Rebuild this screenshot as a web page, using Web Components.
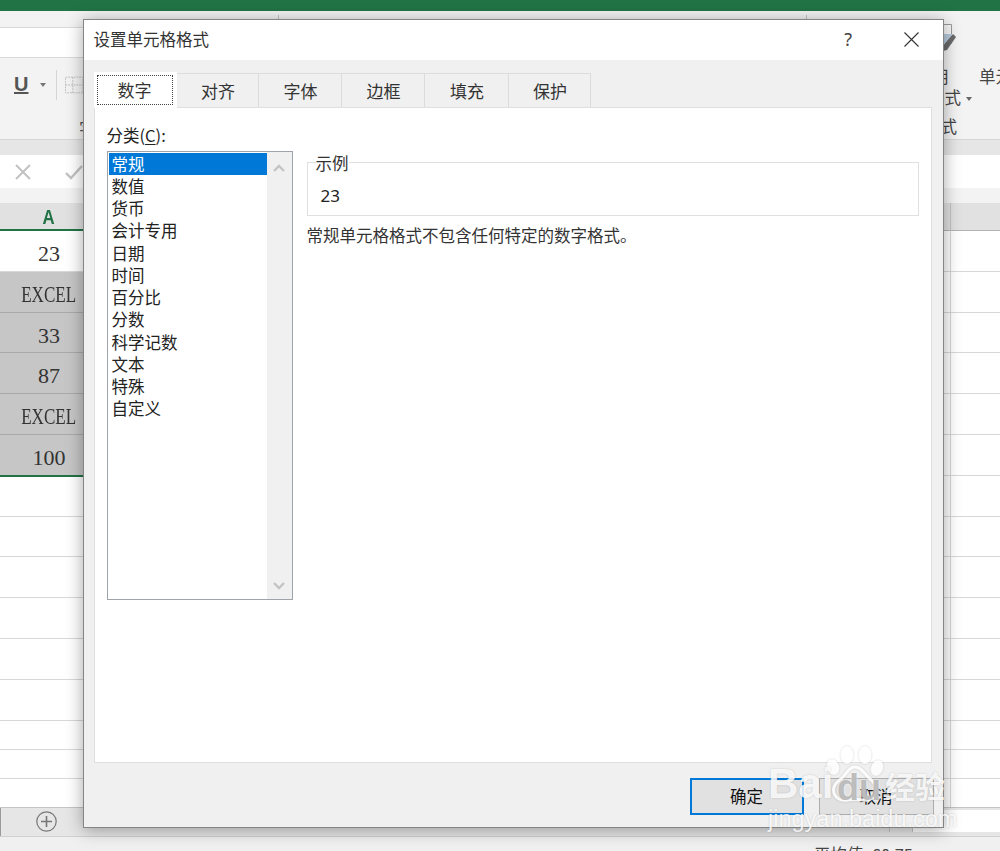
<!DOCTYPE html>
<html lang="zh-CN">
  <head>
    <meta charset="utf8" />
    <title>设置单元格格式</title>
    <style>
      html, body {
        margin: 0;
        height: 851px;
        overflow: hidden;
        font-family: "Noto Sans CJK SC", "Noto Sans", sans-serif;
      }
    </style>
  </head>
  <body>
    <excel-window>
      <excel-ribbon></excel-ribbon>
      <formula-bar></formula-bar>
      <sheet-header></sheet-header>
      <sheet-row value="23" first></sheet-row>
      <sheet-row value="EXCEL" narrow selected></sheet-row>
      <sheet-row value="33" selected></sheet-row>
      <sheet-row value="87" selected></sheet-row>
      <sheet-row value="EXCEL" narrow selected></sheet-row>
      <sheet-row value="100" selected last></sheet-row>
      <sheet-row></sheet-row>
      <sheet-row></sheet-row>
      <sheet-row></sheet-row>
      <sheet-row></sheet-row>
      <sheet-row></sheet-row>
      <sheet-row></sheet-row>
      <sheet-row short></sheet-row>
      <sheet-row short></sheet-row>
      <sheet-row short end></sheet-row>
      <sheet-tabs></sheet-tabs>
      <status-bar></status-bar>
    </excel-window>

    <format-dialog>
      <dialog-tab active>数字</dialog-tab>
      <dialog-tab>对齐</dialog-tab>
      <dialog-tab w="83">字体</dialog-tab>
      <dialog-tab w="83">边框</dialog-tab>
      <dialog-tab w="84">填充</dialog-tab>
      <dialog-tab>保护</dialog-tab>

      <list-item slot="list" selected>常规</list-item>
      <list-item slot="list">数值</list-item>
      <list-item slot="list">货币</list-item>
      <list-item slot="list">会计专用</list-item>
      <list-item slot="list">日期</list-item>
      <list-item slot="list">时间</list-item>
      <list-item slot="list">百分比</list-item>
      <list-item slot="list">分数</list-item>
      <list-item slot="list">科学记数</list-item>
      <list-item slot="list">文本</list-item>
      <list-item slot="list">特殊</list-item>
      <list-item slot="list">自定义</list-item>

      <dialog-button slot="buttons" primary>确定</dialog-button>
      <dialog-button slot="buttons">取消</dialog-button>
    </format-dialog>

    <baidu-mark></baidu-mark>

    <script>
      function define(tag, html, onConnect) {
        const template = document.createElement("template")
        template.innerHTML = html
        customElements.define(tag, class extends HTMLElement {
          connectedCallback() {
            if (!this.shadowRoot) {
              this.attachShadow({ mode: "open" })
              this.shadowRoot.appendChild(template.content.cloneNode(true))
              if (onConnect) onConnect(this, this.shadowRoot)
            }
          }
        })
      }

      define("excel-window", `
<style>
  :host { display: block; width: 1000px; height: 851px; overflow: hidden; background: #f3f3f3; }
  .title { height: 11px; background: #217346; }
</style>
<div class="title"></div>
<slot></slot>
`)

      define("excel-ribbon", `
<style>
  :host {
    display: flex;
    height: 129px;
    box-sizing: border-box;
    border-bottom: 1px solid #d6d6d6;
    background: #f3f3f3;
    color: #444;
    font-size: 16.5px;
    line-height: 22px;
    position: relative;
    overflow: hidden;
  }
  .left { width: 83px; flex: none; }
  .name { height: 31px; margin-top: 16px; background: #fff; box-sizing: border-box; border-top: 1px solid #d9d9d9; border-bottom: 1px solid #d9d9d9; }
  .tools { display: flex; align-items: center; height: 54px; }
  .u { font: bold 20px/22px "Liberation Sans", sans-serif; color: #555; text-decoration: underline; margin: -2px 0 0 14px; width: 28px; }
  .caret { width: 0; height: 0; border: 3px solid transparent; border-top: 4px solid #777; border-bottom: 0; margin-right: 10px; }
  .sep { width: 1px; height: 30px; background: #d5d5d5; margin-right: 8px; }
  .group { margin: 5px 0 0 79px; white-space: nowrap; color: #555; }
  .spacer { flex: 1; min-width: 0; }
  .styles { width: 84px; flex: none; white-space: nowrap; }
  .styles svg { display: block; margin: 13px 0 0 45px; }
  .line1 { margin: 13px 0 0 21px; }
  .line2 { margin-top: -1px; }
  .line2 i { display: inline-block; width: 0; height: 0; border: 3px solid transparent; border-top: 4px solid #666; border-bottom: 0; margin: 0 0 3px 5px; }
  .line3 { margin: 7px 0 0 29px; }
  .cell { flex: none; width: 21px; margin-top: 54px; white-space: nowrap; }
  .tick { position: absolute; top: 4px; width: 1px; height: 4px; background: #c4c4c4; }
</style>
<span class="tick" style="left:278px"></span>
<span class="tick" style="left:806px"></span>
<div class="left">
  <div class="name"></div>
  <div class="tools">
    <span class="u">U</span>
    <span class="caret"></span>
    <span class="sep"></span>
    <svg width="20" height="18" viewBox="0 0 20 18" fill="none" stroke="#bdbdbd" stroke-dasharray="2 1"><path d="M.5.5h19v17H.5zM.5 9h19M8.5.5v17"/></svg>
  </div>
  <div class="group">字体</div>
</div>
<div class="spacer"></div>
<div class="styles">
  <svg width="16" height="28" viewBox="0 0 16 28">
    <path d="M.5.5h11v10H.5z" fill="#f7f7f7" stroke="#9a9a9a"/>
    <path d="M0 10h12v10H0z" fill="#b9cbdf"/>
    <path d="M2 23 13 10l3 3-9 13-4 1z" fill="#6b6b6b"/>
  </svg>
  <div class="line1">套用</div>
  <div class="line2">表格格式<i></i></div>
  <div class="line3">样式</div>
</div>
<div class="cell">单元格</div>
`)

      define("formula-bar", `
<style>
  :host { display: block; padding-top: 15px; background: #e6e6e6; }
  .bar { display: flex; align-items: center; height: 33px; background: #fff; margin-bottom: 15px; }
  svg { display: block; margin-left: 15px; }
  svg + svg { margin-left: 34px; }
</style>
<div class="bar">
  <svg width="16" height="16" viewBox="0 0 16 16" fill="none" stroke="#c2c2c2" stroke-width="2"><path d="M1 1l14 14M15 1 1 15"/></svg>
  <svg width="18" height="16" viewBox="0 0 18 16" fill="none" stroke="#c2c2c2" stroke-width="2.4"><path d="M1 9l5 5L17 2"/></svg>
</div>
`)

      define("sheet-header", `
<style>
  :host { display: grid; grid-template-columns: 98px 853px 1fr; height: 28px; background: #e1e1e1; box-shadow: inset 0 -1px 0 #b4b4b4; }
  .a { text-align: center; border-bottom: 2px solid #217346; height: 28px; box-sizing: border-box; color: #217346; font: bold 21px/28px "Liberation Sans", sans-serif; }
  .a span { display: inline-block; transform: scaleX(.8); }
  .b { border-right: 1px solid #c4c4c4; }
</style>
<div class="a"><span>A</span></div>
<div class="b"></div>
<div></div>
`)

      define("sheet-row", `
<style>
  :host { display: grid; grid-template-columns: 98px 853px 1fr; grid-template-rows: minmax(0, 1fr); height: 40.8px; box-sizing: border-box; background: #fff; border-bottom: 1px solid #d8d8d8; }
  :host([short]) { height: 29px; }
  :host([end]) { height: 28px; border-bottom: 0; }
  .a { text-align: center; color: #333; font: 22px/46px "Liberation Serif", serif; }
  .a span { display: inline-block; }
  :host([narrow]) .a { line-height: 45px; }
  :host([narrow]) .a span { font-size: 24px; transform: scaleX(.71); }
  :host([selected]) .a { background: #c6c6c6; box-shadow: 0 1px 0 #a9a9a9; }
  :host([last]) .a { box-shadow: 0 2px 0 #217346; }
  .b { border-right: 1px solid #d8d8d8; }
</style>
<div class="a"><span></span></div>
<div class="b"></div>
<div></div>
`, (el, root) => {
        root.querySelector("span").textContent = el.getAttribute("value") || ""
      })

      define("sheet-tabs", `
<style>
  :host { display: flex; align-items: center; height: 28px; background: #e6e6e6; border-top: 1px solid #c4c4c4; border-bottom: 1px solid #d0d0d0; }
  .edge { width: 1px; height: 100%; background: #9a9a9a; }
  svg { display: block; margin-left: 35px; }
  .thumb { margin-left: auto; height: 22px; width: 24px; box-sizing: border-box; border-left: 1px solid #c4c4c4; border-right: 1px solid #c4c4c4; align-self: flex-start; margin-top: 2px; }
  .scroll { height: 22px; width: 87px; background: #fff; align-self: flex-start; margin-top: 2px; }
</style>
<div class="edge"></div>
<svg width="21" height="21" viewBox="0 0 21 21" fill="none" stroke="#777"><circle cx="10.5" cy="10.5" r="9.7" stroke-width="1.2"/><path d="M5 10.5h11M10.5 5v11" stroke-width="1.6"/></svg>
<div class="thumb"></div>
<div class="scroll"></div>
`)

      define("status-bar", `
<style>
  :host { display: block; height: 30px; box-sizing: border-box; padding: 6px 0 0 814px; background: #f0f0f0; color: #444; font-size: 16.5px; line-height: 22px; white-space: nowrap; }
</style>
平均值: 60.75
`)

      define("format-dialog", `
<style>
  :host {
    display: block;
    position: absolute;
    left: 83px;
    top: 19px;
    width: 861px;
    height: 809px;
    box-sizing: border-box;
    border: 1.5px solid #858585;
    background: #f0f0f0;
    box-shadow: 0 2px 16px rgba(0, 0, 0, .35);
    color: #222;
    font-size: 16.5px;
    line-height: 22px;
  }
  .title { display: flex; align-items: center; height: 39.5px; box-sizing: border-box; padding: 0 0 2px 9.5px; background: #fff; color: #333; }
  .title .q { margin-left: auto; font-family: "Noto Sans", sans-serif; color: #444; font-size: 18px; }
  .title svg { display: block; margin: 1px 24px 0 52px; }
  .body { padding: 13px 9.5px 0 9.5px; }
  .tabs { display: flex; height: 34px; }
  .panel { width: 838px; height: 656px; box-sizing: border-box; background: #fff; border: 1px solid #dfdfdf; padding: 16px 0 0 12px; display: grid; grid-template-columns: 186px 612px; column-gap: 14px; align-items: start; }
  .label { height: 22px; margin-bottom: 5px; }
  .label u { text-underline-offset: 2px; }
  .list { display: flex; height: 449px; box-sizing: border-box; border: 1px solid #9fa4ab; padding: 1px 0 0 1px; background: #fff; }
  .items { flex: 1; min-width: 0; }
  .bar { display: flex; flex-direction: column; justify-content: space-between; width: 25px; margin-top: -1px; padding: 12px 0 9px; box-sizing: border-box; background: #f0f0f0; }
  .bar svg { display: block; margin-left: 6px; }
  .right { padding-top: 28px; }
  fieldset { margin: 0; padding: 0 8px; border: 1px solid #e0e0e0; }
  legend { padding: 0; line-height: 22px; height: 22px; background: #fff; color: #333; }
  .sample { height: 41px; box-sizing: border-box; padding: 11px 0 0 5px; font: 17px/22px "Noto Sans", sans-serif; }
  .desc { margin-top: 8px; color: #333; }
  .buttons { display: flex; justify-content: flex-end; gap: 15px; padding-top: 15px; }
</style>
<div class="title">
  <span>设置单元格格式</span>
  <span class="q">?</span>
  <svg width="15" height="15" viewBox="0 0 15 15" fill="none" stroke="#333" stroke-width="1.1"><path d="M.5.5l14 14M14.5.5l-14 14"/></svg>
</div>
<div class="body">
  <div class="tabs"><slot></slot></div>
  <div class="panel">
    <div>
      <div class="label">分类(<u>C</u>):</div>
      <div class="list">
        <div class="items"><slot name="list"></slot></div>
        <div class="bar">
          <svg width="12" height="8" viewBox="0 0 12 8" fill="none" stroke="#c4c4c4" stroke-width="2.4"><path d="M1 7l5-5 5 5"/></svg>
          <svg width="12" height="8" viewBox="0 0 12 8" fill="none" stroke="#c4c4c4" stroke-width="2.4"><path d="M1 1l5 5 5-5"/></svg>
        </div>
      </div>
    </div>
    <div class="right">
      <fieldset>
        <legend>示例</legend>
        <div class="sample">23</div>
      </fieldset>
      <div class="desc">常规单元格格式不包含任何特定的数字格式。</div>
    </div>
  </div>
  <div class="buttons"><slot name="buttons"></slot></div>
</div>
`)

      define("dialog-tab", `
<style>
  :host { display: block; width: 82px; height: 34px; box-sizing: border-box; border: 1px solid #dcdcdc; border-left: 0; border-bottom: 0; padding-left: 2px; text-align: center; font-size: 17px; line-height: 34px; color: #333; background: #f0f0f0; }
  :host([active]) { width: 83px; height: 36px; margin-top: -1px; background: #fff; position: relative; z-index: 1; padding: 3px 4px 0 3px; border: 0; line-height: 28px; }
  .focus { display: block; height: 30px; box-sizing: border-box; }
  :host([active]) .focus { border: 1px dotted #444; }
</style>
<span class="focus"><slot></slot></span>
`, el => {
        if (el.hasAttribute("w")) el.style.width = el.getAttribute("w") + "px"
      })

      define("list-item", `
<style>
  :host { display: block; height: 22.27px; line-height: 23px; padding-left: 3px; color: #222; white-space: nowrap; }
  :host([selected]) { background: #0078d7; color: #fff; }
</style>
<slot></slot>
`)

      define("dialog-button", `
<style>
  :host { display: block; width: 115px; height: 37px; box-sizing: border-box; border: 1px solid #adadad; background: #e1e1e1; text-align: center; line-height: 35px; color: #111; }
  :host([primary]) { width: 114px; border: 2px solid #0078d7; line-height: 33px; }
</style>
<slot></slot>
`)

      define("baidu-mark", `
<style>
  :host { display: block; position: absolute; left: 765px; top: 745px; width: 190px; height: 90px; color: rgba(255, 255, 255, .85); pointer-events: none; }
  span { position: absolute; white-space: nowrap; }
  .word { font: bold 42px/42px "Liberation Sans", sans-serif; text-shadow: 0 0 2px rgba(0, 0, 0, .18); }
  .du { color: rgba(160, 160, 160, .7); text-shadow: 0 0 2px #fff; font-size: 36px; }
  .cn { font: bold 30px/36px "Noto Sans CJK SC", sans-serif; text-shadow: 0 0 2px rgba(0, 0, 0, .18); }
  .url { font: 23.5px/26px "Liberation Sans", sans-serif; text-shadow: 0 0 2px rgba(0, 0, 0, .18); }
  svg { position: absolute; left: 58px; top: 0; filter: drop-shadow(0 0 1px rgba(0, 0, 0, .2)); }
</style>
<svg width="66" height="58" viewBox="0 0 66 58" fill="#fff" opacity=".85">
  <ellipse cx="10" cy="22" rx="6" ry="8" transform="rotate(-20 10 22)"/>
  <ellipse cx="24" cy="10" rx="6.5" ry="9"/>
  <ellipse cx="42" cy="10" rx="6.5" ry="9"/>
  <ellipse cx="54" cy="23" rx="6" ry="8" transform="rotate(20 54 23)"/>
  <path d="M32 22c6 0 9 6 14 11 5 4 9 8 7 15-2 6-8 8-14 7-5-1-9-1-14 0-6 1-12-1-14-7-2-7 3-11 8-15 5-5 7-11 13-11z" fill="none" stroke="#fff" stroke-width="3"/>
</svg>
<span class="word" style="left:3px;top:18px">Bai</span>
<span class="word du" style="left:72px;top:22px">du</span>
<span class="cn" style="left:120px;top:22px">经验</span>
<span class="url" style="left:3px;top:61px">jingyan.baidu.com</span>
`)
    </script>
  </body>
</html>
